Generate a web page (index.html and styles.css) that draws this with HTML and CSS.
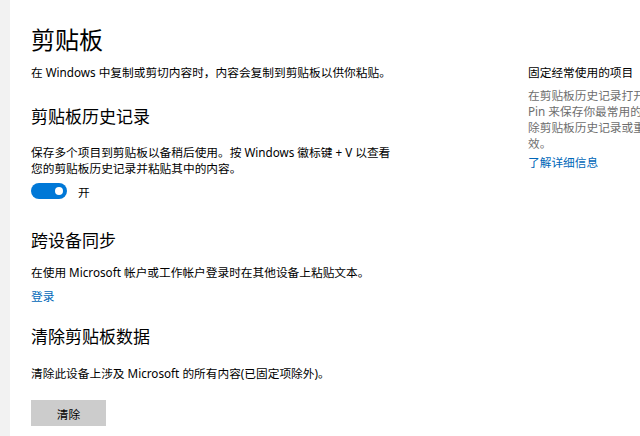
FILE: index.html
```html
<!DOCTYPE html>
<html lang="zh-CN">
<head>
<meta charset="UTF-8">
<title>剪贴板</title>
<link rel="stylesheet" href="styles.css">
</head>
<body>

<div class="window">
  <div class="nav-strip"></div>

  <div class="page">
    <div class="main">
      <h1>剪贴板</h1>
      <p class="desc">在 Windows 中复制或剪切内容时，内容会复制到剪贴板以供你粘贴。</p>

      <h2 class="first">剪贴板历史记录</h2>
      <p class="body-text">保存多个项目到剪贴板以备稍后使用。按 Windows 徽标键 + V 以查看<br>您的剪贴板历史记录并粘贴其中的内容。</p>
      <div class="toggle-row">
        <span class="toggle"><span class="knob"></span></span>
        <span class="toggle-label">开</span>
      </div>

      <h2 class="sync">跨设备同步</h2>
      <p class="body-text sync-text">在使用 Microsoft 帐户或工作帐户登录时在其他设备上粘贴文本。</p>
      <a class="link signin" href="#">登录</a>

      <h2 class="clear">清除剪贴板数据</h2>
      <p class="body-text clear-text">清除此设备上涉及 Microsoft 的所有内容(已固定项除外)。</p>
      <button class="clear-btn">清除</button>
    </div>

    <div class="aside">
      <h3>固定经常使用的项目</h3>
      <p class="aside-text">
        <span>在剪贴板历史记录打开时，选择</span>
        <span>Pin 来保存你最常用的项目。删</span>
        <span>除剪贴板历史记录或重启电脑时它们不会失</span>
        <span>效。</span>
      </p>
      <a class="link" href="#">了解详细信息</a>
    </div>
  </div>
</div>

</body>
</html>
```

FILE: styles.css
```css
html, body {
  margin: 0;
  padding: 0;
  background-color: #fff;
  overflow: hidden;
}
body {
  font-family: "Noto Sans", "Noto Sans CJK SC", sans-serif;
  font-size: 11.7px;
  color: #000;
}
.window {
  display: flex;
  width: 640px;
  height: 436px;
}
.nav-strip {
  width: 10px;
  flex-shrink: 0;
  background-color: #f2f2f2;
}
.page {
  display: flex;
  flex: 1;
  padding-left: 21px;
  padding-top: 22px;
}
.main {
  width: 497px;
  flex-shrink: 0;
}
h1 {
  margin: 0;
  font-size: 24px;
  font-weight: normal;
  line-height: 36px;
}
h2 {
  margin: 0;
  font-size: 17px;
  font-weight: normal;
  line-height: 24px;
}
p {
  margin: 0;
}
.desc {
  margin-top: 6px;
  line-height: 16px;
}
h2.first {
  margin-top: 25px;
}
.body-text {
  line-height: 15.5px;
  margin-top: 16px;
}
.toggle-row {
  display: flex;
  align-items: center;
  height: 20px;
  margin-top: 5px;
}
.toggle {
  position: relative;
  width: 36px;
  height: 16px;
  border-radius: 8px;
  background-color: #0078d7;
}
.toggle .knob {
  position: absolute;
  right: 4px;
  top: 4px;
  width: 8px;
  height: 8px;
  border-radius: 50%;
  background-color: #fff;
}
.toggle-label {
  margin-left: 11px;
}
h2.sync {
  margin-top: 28px;
}
.sync-text {
  margin-top: 11px;
  line-height: 16px;
}
.link {
  display: block;
  color: #0067b8;
  text-decoration: none;
  line-height: 16px;
}
.signin {
  margin-top: 8px;
}
h2.clear {
  margin-top: 21px;
}
.clear-text {
  margin-top: 16px;
  line-height: 16px;
}
.clear-btn {
  display: block;
  margin-top: 19px;
  width: 75px;
  height: 26px;
  border: none;
  background-color: #cccccc;
  font-family: inherit;
  font-size: 11.7px;
  color: #000;
  padding: 0;
}
.aside {
  padding-top: 42px;
  white-space: nowrap;
}
h3 {
  margin: 0;
  font-size: 11.7px;
  font-weight: normal;
  line-height: 16px;
}
.aside-text {
  margin-top: 7px;
  color: #6e6e6e;
  line-height: 16px;
}
.aside-text span {
  display: block;
}
.aside .link {
  margin-top: 3px;
}
```
